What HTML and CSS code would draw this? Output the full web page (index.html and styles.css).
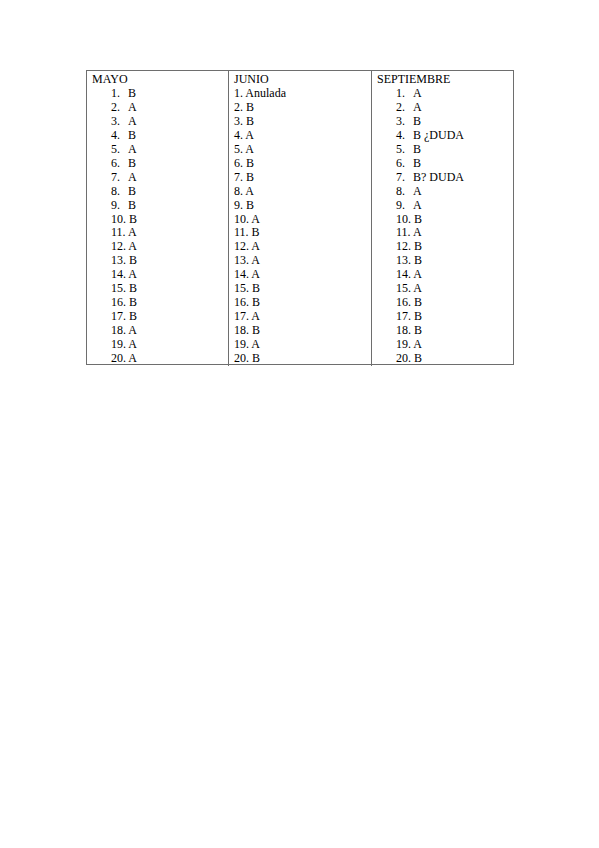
FILE: index.html
```html
<!DOCTYPE html>
<html lang="es">
<head>
<meta charset="utf-8">
<title>Respuestas</title>
<link rel="stylesheet" href="styles.css">
</head>
<body>
<div class="page">
  <div class="sheet">
    <div class="col">
      <div class="head">MAYO</div>
      <div class="li"><span class="n">1.</span>B</div>
      <div class="li"><span class="n">2.</span>A</div>
      <div class="li"><span class="n">3.</span>A</div>
      <div class="li"><span class="n">4.</span>B</div>
      <div class="li"><span class="n">5.</span>A</div>
      <div class="li"><span class="n">6.</span>B</div>
      <div class="li"><span class="n">7.</span>A</div>
      <div class="li"><span class="n">8.</span>B</div>
      <div class="li"><span class="n">9.</span>B</div>
      <div class="li">10. B</div>
      <div class="li">11. A</div>
      <div class="li">12. A</div>
      <div class="li">13. B</div>
      <div class="li">14. A</div>
      <div class="li">15. B</div>
      <div class="li">16. B</div>
      <div class="li">17. B</div>
      <div class="li">18. A</div>
      <div class="li">19. A</div>
      <div class="li">20. A</div>
    </div>
    <div class="col">
      <div class="head">JUNIO</div>
      <div class="pl">1. Anulada</div>
      <div class="pl">2. B</div>
      <div class="pl">3. B</div>
      <div class="pl">4. A</div>
      <div class="pl">5. A</div>
      <div class="pl">6. B</div>
      <div class="pl">7. B</div>
      <div class="pl">8. A</div>
      <div class="pl">9. B</div>
      <div class="pl">10. A</div>
      <div class="pl">11. B</div>
      <div class="pl">12. A</div>
      <div class="pl">13. A</div>
      <div class="pl">14. A</div>
      <div class="pl">15. B</div>
      <div class="pl">16. B</div>
      <div class="pl">17. A</div>
      <div class="pl">18. B</div>
      <div class="pl">19. A</div>
      <div class="pl">20. B</div>
    </div>
    <div class="col">
      <div class="head">SEPTIEMBRE</div>
      <div class="li"><span class="n">1.</span>A</div>
      <div class="li"><span class="n">2.</span>A</div>
      <div class="li"><span class="n">3.</span>B</div>
      <div class="li"><span class="n">4.</span>B ¿DUDA</div>
      <div class="li"><span class="n">5.</span>B</div>
      <div class="li"><span class="n">6.</span>B</div>
      <div class="li"><span class="n">7.</span>B? DUDA</div>
      <div class="li"><span class="n">8.</span>A</div>
      <div class="li"><span class="n">9.</span>A</div>
      <div class="li">10. B</div>
      <div class="li">11. A</div>
      <div class="li">12. B</div>
      <div class="li">13. B</div>
      <div class="li">14. A</div>
      <div class="li">15. A</div>
      <div class="li">16. B</div>
      <div class="li">17. B</div>
      <div class="li">18. B</div>
      <div class="li">19. A</div>
      <div class="li">20. B</div>
    </div>
  </div>
</div>
</body>
</html>
```
FILE: styles.css
```css
html, body {
  margin: 0;
  padding: 0;
  background: #ffffff;
}
.page {
  width: 599px;
  height: 848px;
  padding: 70px 0 0 86px;
  box-sizing: border-box;
  font-family: "Liberation Serif", "Times New Roman", serif;
  font-size: 12px;
  line-height: 13.95px;
  color: #000;
}
.sheet {
  display: grid;
  grid-template-columns: 141px 143px 142px;
  width: max-content;
  height: 295px;
  box-sizing: border-box;
  border: 1px solid #6e6e6e;
}
.col {
  padding: 2px 4px 0 5px;
  white-space: nowrap;
}
.col + .col {
  border-left: 1px solid #6e6e6e;
}
.li {
  padding-left: 19px;
}
.n {
  display: inline-block;
  width: 17px;
}
```
